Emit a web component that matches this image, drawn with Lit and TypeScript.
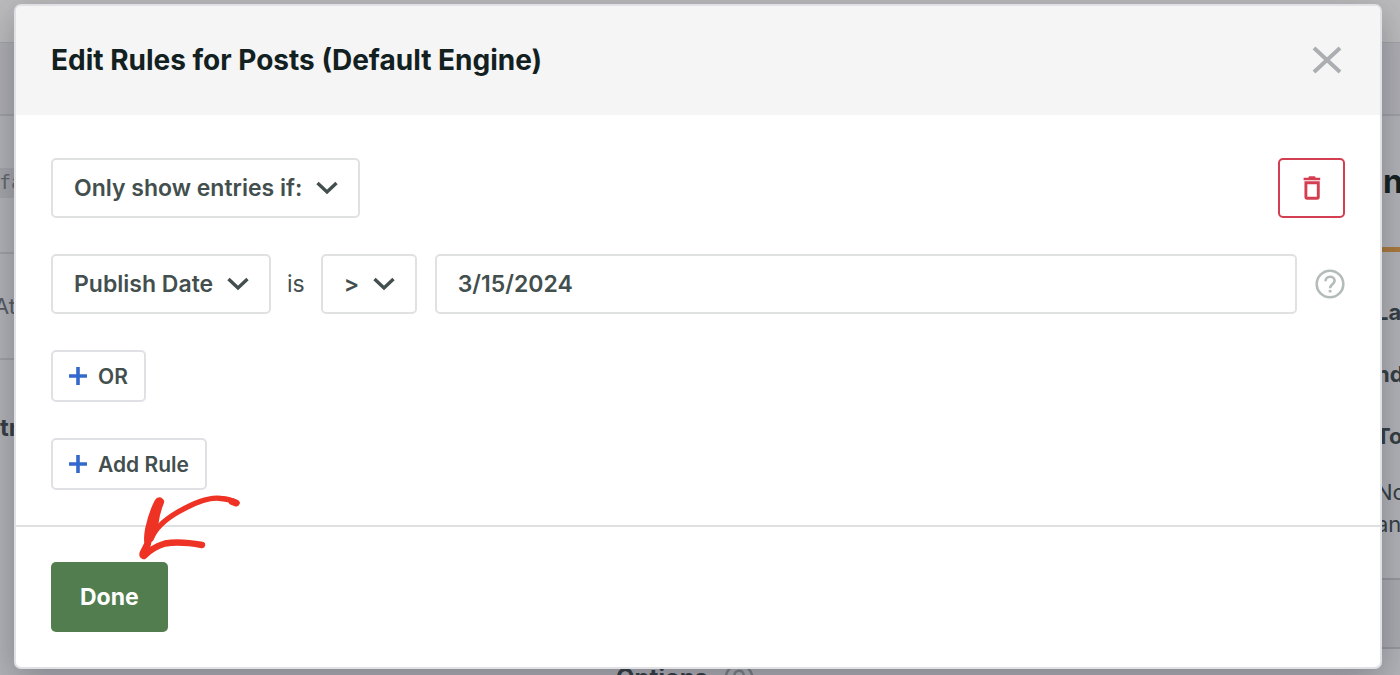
import { LitElement, html, css, svg } from "lit";
import { customElement, property, state } from "lit/decorators.js";

const plus = svg`<svg class="plus" viewBox="0 0 18 18" aria-hidden="true"><path d="M9 0v18M0 9h18" /></svg>`;

const helpGlyph = svg`
  <svg class="help-glyph" viewBox="0 0 30 30" fill="none" stroke="currentColor" aria-hidden="true">
    <circle cx="15" cy="15" r="13.300" stroke-width="2.600" />
    <path d="M10.500 12.200c0-2.700 2-4.500 4.600-4.500s4.500 1.700 4.500 4.100c0 3.300-4.500 3.700-4.500 7.400" stroke-width="2.600" />
    <path d="M13.700 21h2.800v2.500h-2.800z" fill="currentColor" stroke="none" />
  </svg>
`;

@customElement("rule-select")
class RuleSelect extends LitElement {
  @property() label = "";
  @property() value = "";

  static styles = css`
    :host {
      display: inline-grid;
      align-items: center;
      flex: none;
    }
    .select {
      grid-area: 1 / 1;
      appearance: none;
      box-sizing: border-box;
      height: 60px;
      margin: 0;
      padding: 0 55px 0 21px;
      border: 2px solid #e0e2e2;
      border-radius: 5px;
      background: #fff;
      color: #434f4e;
      font: 600 23px "Inter", sans-serif;
    }
    .chevron {
      grid-area: 1 / 1;
      justify-self: end;
      width: 22px;
      height: 14px;
      margin-right: 22px;
      fill: none;
      stroke: #434f4e;
      stroke-width: 3.4;
      pointer-events: none;
    }
  `;

  render() {
    return html`
      <select class="select" aria-label=${this.label}>
        <option>${this.value}</option>
      </select>
      <svg class="chevron" viewBox="0 0 22 14" aria-hidden="true"><path d="M1.5 2 11 11 20.500 2" /></svg>
    `;
  }
}

@customElement("page-behind")
class PageBehind extends LitElement {
  static styles = css`
    :host {
      display: flex;
      justify-content: space-between;
      position: relative;
      overflow: hidden;
      background: linear-gradient(#bcbcbd 0 42px, #a3a4a9 42px 43px, #aeaeb3 43px 114px, #a0a1a5 114px 116px, #b2b3b7 116px);
      color: #343e42;
      font: 22px/32px "Inter", sans-serif;
      white-space: nowrap;
    }
    .left {
      width: 14px;
      padding-top: 168px;
    }
    .code {
      height: 30px;
      background: #a5a6aa;
      color: #62676b;
      font: 20px/28px "DejaVu Sans Mono", monospace;
      text-indent: -1px;
      margin-bottom: 54px;
    }
    .cell {
      box-sizing: border-box;
      height: 108px;
      border: solid #a0a1a5;
      border-width: 2px 0;
      line-height: 104px;
      text-indent: -6px;
      color: #565c60;
    }
    .entries {
      margin-top: 52px;
      font-weight: 700;
      font-size: 24px;
    }
    .right {
      width: 24px;
      padding-top: 160px;
    }
    .heading {
      height: 87px;
      padding-left: 7px;
      font: 700 32px/44px "Inter", sans-serif;
      color: #14201f;
      box-sizing: border-box;
    }
    .accent {
      height: 5px;
      background: #a97a3c;
      margin-bottom: 44px;
    }
    .term {
      height: 62px;
      font-weight: 700;
    }
    .note {
      height: 32px;
    }
    .notes {
      margin-top: -6px;
    }
    .band {
      height: 67px;
      margin-top: 38px;
      background: #aaabb0;
      border: solid #97989c;
      border-width: 2px 0;
    }
    .options {
      display: flex;
      align-items: center;
      gap: 16px;
      position: absolute;
      left: 44%;
      bottom: -19px;
      font-weight: 700;
      font-size: 24px;
    }
    .help-glyph {
      width: 30px;
      height: 30px;
      color: #7c8386;
    }
  `;

  render() {
    return html`
      <div class="left">
        <div class="code">fa</div>
        <div class="cell">At</div>
        <div class="entries">tr</div>
      </div>
      <div class="options">Options ${helpGlyph}</div>
      <div class="right">
        <div class="heading">n</div>
        <div class="accent"></div>
        <div class="term">La</div>
        <div class="term">nd</div>
        <div class="term">To</div>
        <div class="notes">
          <div class="note">No</div>
          <div class="note">an</div>
        </div>
        <div class="band"></div>
      </div>
    `;
  }
}

@customElement("app-root")
class AppRoot extends LitElement {
  @state() date = "3/15/2024";

  static styles = css`
    :host {
      display: grid;
      min-height: 100vh;
      color: #434f4e;
      font-family: "Inter", sans-serif;
    }
    page-behind {
      grid-area: 1 / 1;
    }
    .modal {
      grid-area: 1 / 1;
      align-self: start;
      z-index: 1;
      margin: 4px 18px 6px 14px;
      border: 2px solid #e0e1e4;
      border-radius: 7px;
      background: #fff;
      box-shadow: 0 10px 36px rgba(30, 30, 50, 0.32);
    }
    .header {
      display: flex;
      align-items: center;
      justify-content: space-between;
      height: 109px;
      padding: 0 35px;
      border-radius: 5px 5px 0 0;
      background: #f5f5f5;
    }
    .title {
      margin: 0;
      color: #12211f;
      font-size: 28px;
      line-height: 37px;
      font-weight: 700;
    }
    button {
      font-family: inherit;
      margin: 0;
      cursor: pointer;
    }
    .close {
      display: flex;
      padding: 0 3px;
      border: 0;
      background: none;
    }
    .close svg {
      width: 30px;
      height: 29px;
      fill: none;
      stroke: #acafb2;
      stroke-width: 4;
    }
    .body {
      display: flex;
      flex-direction: column;
      align-items: flex-start;
      gap: 36px;
      padding: 43px 35px 35px;
    }
    .row {
      display: flex;
      align-items: center;
      align-self: stretch;
    }
    .spread {
      justify-content: space-between;
    }
    .delete {
      display: grid;
      place-items: center;
      width: 67px;
      height: 60px;
      padding: 0;
      border: 2px solid #d33f50;
      border-radius: 5px;
      background: #fff;
    }
    .delete svg {
      width: 18px;
      height: 24px;
    }
    .is {
      margin: 0 16px;
      font-size: 23px;
    }
    .value {
      flex: 1;
      min-width: 0;
      box-sizing: border-box;
      height: 60px;
      margin: 0 18px;
      padding: 0 21px;
      border: 2px solid #e0e2e2;
      border-radius: 5px;
      background: #fff;
      color: #434f4e;
      font: 600 23px "Inter", sans-serif;
    }
    .help {
      display: flex;
      padding: 0;
      border: 0;
      background: none;
      color: #b4bcba;
    }
    .help-glyph {
      width: 30px;
      height: 30px;
    }
    .add {
      display: flex;
      align-items: center;
      gap: 11px;
      height: 52px;
      padding: 0 16px;
      border: 2px solid #e0e1e4;
      border-radius: 5px;
      background: #fff;
      color: #434f4e;
      font-size: 21px;
      font-weight: 600;
    }
    .plus {
      width: 18px;
      height: 18px;
      fill: none;
      stroke: #3568cf;
      stroke-width: 3.6;
    }
    .footer {
      position: relative;
      padding: 35px;
      border-top: 2px solid #dfe0e2;
    }
    .done {
      display: block;
      height: 70px;
      padding: 0 29px;
      border: 0;
      border-radius: 5px;
      background: #527d4e;
      color: #fff;
      font-size: 23px;
      font-weight: 700;
    }
    .arrow {
      position: absolute;
      left: 115px;
      top: -41px;
      width: 120px;
      height: 80px;
      pointer-events: none;
    }
  `;

  private onInput(e: Event) {
    this.date = (e.target as HTMLInputElement).value;
  }

  render() {
    return html`
      <page-behind aria-hidden="true"></page-behind>
      <section class="modal" role="dialog" aria-labelledby="title">
        <header class="header">
          <h1 class="title" id="title">Edit Rules for Posts (Default Engine)</h1>
          <button class="close" aria-label="Close">
            <svg viewBox="0 0 30 29" aria-hidden="true"><path d="M2 2 28 26M28 2 2 26" /></svg>
          </button>
        </header>
        <div class="body">
          <div class="row spread">
            <rule-select label="Condition mode" value="Only show entries if:"></rule-select>
            <button class="delete" aria-label="Delete rule">
              <svg viewBox="0 0 18 24" aria-hidden="true">
                <path d="M5.500 1.300Q5.500 0.300 6.500 0.300h5q1 0 1 1v.5h4.700v2.400H0.600V1.800h4.900z" fill="#d33f50" />
                <path d="M2.900 6.700h12.400v14.200q0 1.300-1.300 1.300H4.200q-1.300 0-1.300-1.300z" fill="none" stroke="#d33f50" stroke-width="2.900" />
              </svg>
            </button>
          </div>
          <div class="row">
            <rule-select label="Field" value="Publish Date"></rule-select>
            <span class="is">is</span>
            <rule-select label="Operator" value="&gt;"></rule-select>
            <input class="value" type="text" aria-label="Value" .value=${this.date} @input=${this.onInput} />
            <button class="help" aria-label="Help">${helpGlyph}</button>
          </div>
          <button class="add">${plus}OR</button>
          <button class="add">${plus}Add Rule</button>
        </div>
        <footer class="footer">
          <button class="done">Done</button>
          <svg class="arrow" viewBox="0 0 120 80" fill="#ee3224" stroke="#ee3224" stroke-linecap="round" stroke-linejoin="round" aria-hidden="true">
            <path d="M24.500 14.500Q26.500 11 30 12.300Q33.500 14 32 17.500Q28 27 26.600 38.500Q22 47 19.500 57L17 68Q14 73 11.500 72Q8 71 9.500 66L14 57Q13.300 50 15 42Q18.500 26 24.500 14.500Z" stroke-width="1.500" />
            <path d="M20 53Q26 38 47 26Q75 10 90 12.500Q99 13 106 17" fill="none" stroke-width="5.400" />
            <path d="M101 15.500 105 17" fill="none" stroke-width="6.800" />
            <path d="M13 70Q22 61 34 57.500Q49 55 71 59" fill="none" stroke-width="6.400" />
          </svg>
        </footer>
      </section>
    `;
  }
}
